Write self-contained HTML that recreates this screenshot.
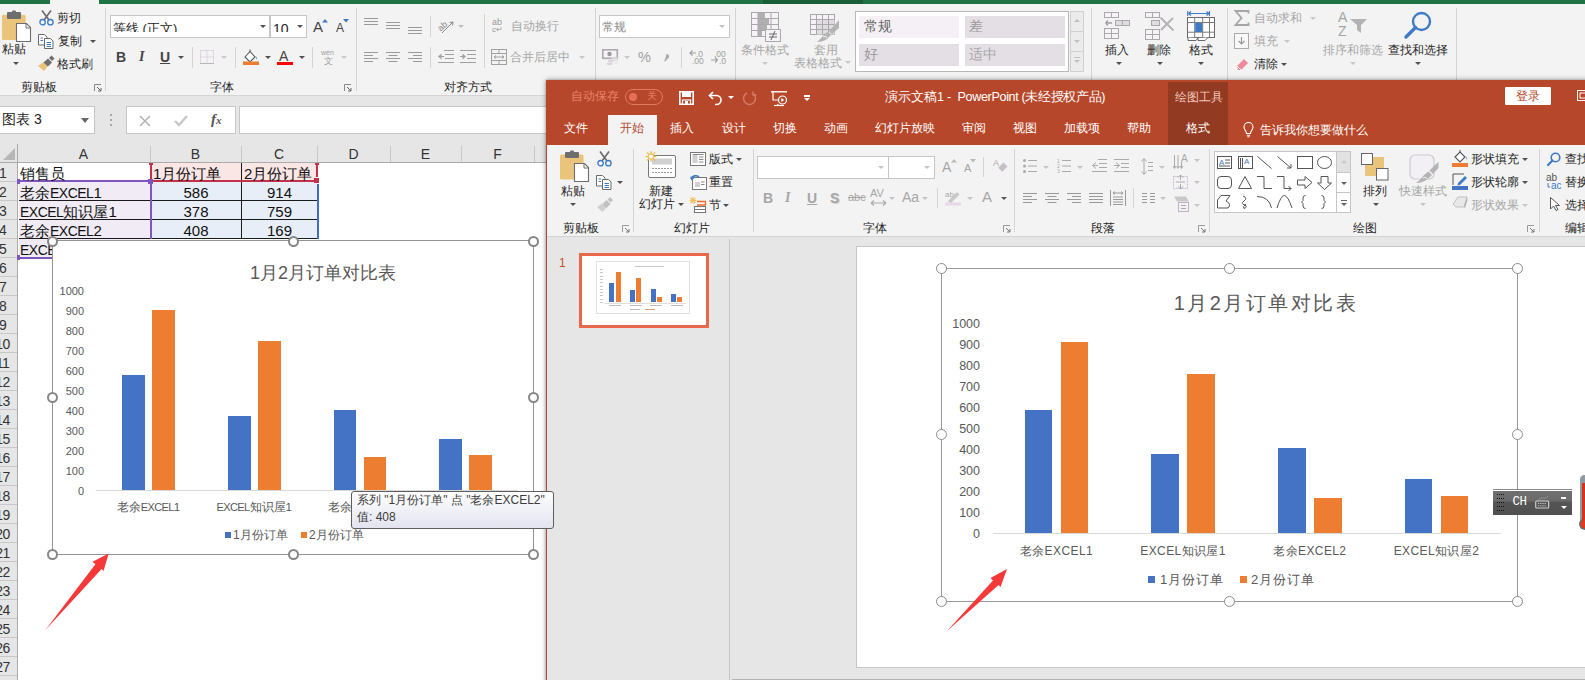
<!DOCTYPE html>
<html><head><meta charset="utf-8">
<style>
*{margin:0;padding:0;box-sizing:border-box}
html,body{width:1585px;height:680px;overflow:hidden;background:#fff}
body{position:relative;font-family:"Liberation Sans",sans-serif;font-size:12px;color:#262626}
.a{position:absolute}
.t{position:absolute;white-space:nowrap;line-height:1}
.sep{position:absolute;width:1px;background:#d6d6d6}
.arr{position:absolute;width:0;height:0;border-left:3px solid transparent;border-right:3px solid transparent;border-top:3px solid #505050}
.arr.l{border-top-color:#c0c0c0}
svg{position:absolute;overflow:visible}
</style></head><body>
<div class="a" style="left:0;top:0;width:1585px;height:4px;background:#217346"></div>
<div class="a" style="left:50px;top:0;width:49px;height:4px;background:#f3f3f3"></div>
<div class="a" style="left:763px;top:0;width:100px;height:4px;background:#1a5e39"></div>
<div class="a" style="left:0;top:4px;width:1585px;height:92px;background:#f3f3f3"></div>
<div class="a" style="left:0;top:95px;width:1585px;height:1px;background:#d5d5d5"></div>
<div class="a" style="left:0;top:96px;width:1585px;height:49px;background:#e6e6e6"></div>
<div class="a" style="left:-2px;top:106px;width:97px;height:28px;background:#fff;border:1px solid #c6c6c6"></div>
<div class="t" style="left:2px;top:112px;font-size:14px;color:#222">图表 3</div>
<div class="arr" style="left:81px;top:118px;border-left-width:4px;border-right-width:4px;border-top-width:5px;border-top-color:#666"></div>
<div class="a" style="left:110px;top:114px;width:2px;height:2px;background:#a8a8a8"></div>
<div class="a" style="left:110px;top:119px;width:2px;height:2px;background:#a8a8a8"></div>
<div class="a" style="left:110px;top:124px;width:2px;height:2px;background:#a8a8a8"></div>
<div class="a" style="left:126px;top:106px;width:110px;height:28px;background:#fff;border:1px solid #c6c6c6"></div>
<svg style="left:139px;top:115px" width="12" height="12"><path d="M1 1L11 11M11 1L1 11" stroke="#b5b5b5" stroke-width="1.6"/></svg>
<svg style="left:174px;top:115px" width="14" height="12"><path d="M1 6L5 10L13 1" stroke="#c8c8c8" stroke-width="2.4" fill="none"/></svg>
<div class="t" style="left:211px;top:112px;font-size:15px;color:#555;font-family:'Liberation Serif',serif;font-style:italic;font-weight:bold">f<span style="font-size:11px">x</span></div>
<div class="a" style="left:239px;top:106px;width:1400px;height:28px;background:#fff;border:1px solid #c6c6c6"></div>
<div class="a" style="left:0;top:144px;width:1585px;height:19px;background:#e6e6e6"></div>
<div class="a" style="left:0;top:162px;width:1585px;height:1px;background:#ababab"></div>
<div class="a" style="left:0;top:163px;width:18px;height:520px;background:#e6e6e6"></div>
<div class="a" style="left:17px;top:144px;width:1px;height:540px;background:#ababab"></div>
<svg style="left:3px;top:148px" width="12" height="12"><path d="M12 0L12 12L0 12Z" fill="#b7b7b7"/></svg>
<div class="a" style="left:150px;top:146px;width:1px;height:16px;background:#c8c8c8"></div>
<div class="t" style="left:17px;width:133px;text-align:center;top:147px;font-size:14px;color:#333">A</div>
<div class="a" style="left:241px;top:146px;width:1px;height:16px;background:#c8c8c8"></div>
<div class="t" style="left:150px;width:91px;text-align:center;top:147px;font-size:14px;color:#333">B</div>
<div class="a" style="left:317px;top:146px;width:1px;height:16px;background:#c8c8c8"></div>
<div class="t" style="left:241px;width:76px;text-align:center;top:147px;font-size:14px;color:#333">C</div>
<div class="a" style="left:390px;top:146px;width:1px;height:16px;background:#c8c8c8"></div>
<div class="t" style="left:317px;width:73px;text-align:center;top:147px;font-size:14px;color:#333">D</div>
<div class="a" style="left:461px;top:146px;width:1px;height:16px;background:#c8c8c8"></div>
<div class="t" style="left:390px;width:71px;text-align:center;top:147px;font-size:14px;color:#333">E</div>
<div class="a" style="left:534px;top:146px;width:1px;height:16px;background:#c8c8c8"></div>
<div class="t" style="left:461px;width:73px;text-align:center;top:147px;font-size:14px;color:#333">F</div>
<div class="a" style="left:606px;top:146px;width:1px;height:16px;background:#c8c8c8"></div>
<div class="t" style="left:534px;width:72px;text-align:center;top:147px;font-size:14px;color:#333">G</div>
<div class="a" style="left:0;top:181px;width:17px;height:1px;background:#c8c8c8"></div>
<div class="t" style="left:-27.5px;width:60px;top:166px;font-size:14px;letter-spacing:-0.6px;color:#333;text-align:center">1</div>
<div class="a" style="left:0;top:200px;width:17px;height:1px;background:#c8c8c8"></div>
<div class="t" style="left:-27.5px;width:60px;top:185px;font-size:14px;letter-spacing:-0.6px;color:#333;text-align:center">2</div>
<div class="a" style="left:0;top:219px;width:17px;height:1px;background:#c8c8c8"></div>
<div class="t" style="left:-27.5px;width:60px;top:204px;font-size:14px;letter-spacing:-0.6px;color:#333;text-align:center">3</div>
<div class="a" style="left:0;top:238px;width:17px;height:1px;background:#c8c8c8"></div>
<div class="t" style="left:-27.5px;width:60px;top:223px;font-size:14px;letter-spacing:-0.6px;color:#333;text-align:center">4</div>
<div class="a" style="left:0;top:257px;width:17px;height:1px;background:#c8c8c8"></div>
<div class="t" style="left:-27.5px;width:60px;top:242px;font-size:14px;letter-spacing:-0.6px;color:#333;text-align:center">5</div>
<div class="a" style="left:0;top:276px;width:17px;height:1px;background:#c8c8c8"></div>
<div class="t" style="left:-27.5px;width:60px;top:261px;font-size:14px;letter-spacing:-0.6px;color:#333;text-align:center">6</div>
<div class="a" style="left:0;top:295px;width:17px;height:1px;background:#c8c8c8"></div>
<div class="t" style="left:-27.5px;width:60px;top:280px;font-size:14px;letter-spacing:-0.6px;color:#333;text-align:center">7</div>
<div class="a" style="left:0;top:314px;width:17px;height:1px;background:#c8c8c8"></div>
<div class="t" style="left:-27.5px;width:60px;top:299px;font-size:14px;letter-spacing:-0.6px;color:#333;text-align:center">8</div>
<div class="a" style="left:0;top:333px;width:17px;height:1px;background:#c8c8c8"></div>
<div class="t" style="left:-27.5px;width:60px;top:318px;font-size:14px;letter-spacing:-0.6px;color:#333;text-align:center">9</div>
<div class="a" style="left:0;top:352px;width:17px;height:1px;background:#c8c8c8"></div>
<div class="t" style="left:-27.5px;width:60px;top:337px;font-size:14px;letter-spacing:-0.6px;color:#333;text-align:center">10</div>
<div class="a" style="left:0;top:371px;width:17px;height:1px;background:#c8c8c8"></div>
<div class="t" style="left:-27.5px;width:60px;top:356px;font-size:14px;letter-spacing:-0.6px;color:#333;text-align:center">11</div>
<div class="a" style="left:0;top:390px;width:17px;height:1px;background:#c8c8c8"></div>
<div class="t" style="left:-27.5px;width:60px;top:375px;font-size:14px;letter-spacing:-0.6px;color:#333;text-align:center">12</div>
<div class="a" style="left:0;top:409px;width:17px;height:1px;background:#c8c8c8"></div>
<div class="t" style="left:-27.5px;width:60px;top:394px;font-size:14px;letter-spacing:-0.6px;color:#333;text-align:center">13</div>
<div class="a" style="left:0;top:428px;width:17px;height:1px;background:#c8c8c8"></div>
<div class="t" style="left:-27.5px;width:60px;top:413px;font-size:14px;letter-spacing:-0.6px;color:#333;text-align:center">14</div>
<div class="a" style="left:0;top:447px;width:17px;height:1px;background:#c8c8c8"></div>
<div class="t" style="left:-27.5px;width:60px;top:432px;font-size:14px;letter-spacing:-0.6px;color:#333;text-align:center">15</div>
<div class="a" style="left:0;top:466px;width:17px;height:1px;background:#c8c8c8"></div>
<div class="t" style="left:-27.5px;width:60px;top:451px;font-size:14px;letter-spacing:-0.6px;color:#333;text-align:center">16</div>
<div class="a" style="left:0;top:485px;width:17px;height:1px;background:#c8c8c8"></div>
<div class="t" style="left:-27.5px;width:60px;top:470px;font-size:14px;letter-spacing:-0.6px;color:#333;text-align:center">17</div>
<div class="a" style="left:0;top:504px;width:17px;height:1px;background:#c8c8c8"></div>
<div class="t" style="left:-27.5px;width:60px;top:489px;font-size:14px;letter-spacing:-0.6px;color:#333;text-align:center">18</div>
<div class="a" style="left:0;top:523px;width:17px;height:1px;background:#c8c8c8"></div>
<div class="t" style="left:-27.5px;width:60px;top:508px;font-size:14px;letter-spacing:-0.6px;color:#333;text-align:center">19</div>
<div class="a" style="left:0;top:542px;width:17px;height:1px;background:#c8c8c8"></div>
<div class="t" style="left:-27.5px;width:60px;top:527px;font-size:14px;letter-spacing:-0.6px;color:#333;text-align:center">20</div>
<div class="a" style="left:0;top:561px;width:17px;height:1px;background:#c8c8c8"></div>
<div class="t" style="left:-27.5px;width:60px;top:546px;font-size:14px;letter-spacing:-0.6px;color:#333;text-align:center">21</div>
<div class="a" style="left:0;top:580px;width:17px;height:1px;background:#c8c8c8"></div>
<div class="t" style="left:-27.5px;width:60px;top:565px;font-size:14px;letter-spacing:-0.6px;color:#333;text-align:center">22</div>
<div class="a" style="left:0;top:599px;width:17px;height:1px;background:#c8c8c8"></div>
<div class="t" style="left:-27.5px;width:60px;top:584px;font-size:14px;letter-spacing:-0.6px;color:#333;text-align:center">23</div>
<div class="a" style="left:0;top:618px;width:17px;height:1px;background:#c8c8c8"></div>
<div class="t" style="left:-27.5px;width:60px;top:603px;font-size:14px;letter-spacing:-0.6px;color:#333;text-align:center">24</div>
<div class="a" style="left:0;top:637px;width:17px;height:1px;background:#c8c8c8"></div>
<div class="t" style="left:-27.5px;width:60px;top:622px;font-size:14px;letter-spacing:-0.6px;color:#333;text-align:center">25</div>
<div class="a" style="left:0;top:656px;width:17px;height:1px;background:#c8c8c8"></div>
<div class="t" style="left:-27.5px;width:60px;top:641px;font-size:14px;letter-spacing:-0.6px;color:#333;text-align:center">26</div>
<div class="a" style="left:0;top:675px;width:17px;height:1px;background:#c8c8c8"></div>
<div class="t" style="left:-27.5px;width:60px;top:660px;font-size:14px;letter-spacing:-0.6px;color:#333;text-align:center">27</div>
<div class="a" style="left:0;top:694px;width:17px;height:1px;background:#c8c8c8"></div>
<div class="t" style="left:-27.5px;width:60px;top:679px;font-size:14px;letter-spacing:-0.6px;color:#333;text-align:center">28</div>
<svg style="left:2px;top:12px" width="30" height="30"><rect x="0" y="2.8" width="23.7" height="25.2" rx="1.5" fill="#ebc47c"/><rect x="5" y="0" width="14" height="7" rx="1" fill="#6e6e6e"/><rect x="10" y="-1.5" width="4" height="3" rx="1" fill="#6e6e6e"/><path d="M14.5 11.5H24.5L28.5 15.5V29.5H14.5Z" fill="#fff" stroke="#6e6e6e" stroke-width="1.1"/><path d="M24 11.5V16H28.5" fill="none" stroke="#6e6e6e" stroke-width="1"/></svg>
<div class="t" style="left:2px;top:43px;font-size:12px;color:#262626;">粘贴</div>
<div class="arr" style="left:12.5px;top:61.5px;border-top-color:#505050"></div>
<svg style="left:39px;top:10px" width="15" height="16"><path d="M3 0.5L10 10M12 0.5L5 10" stroke="#6a6a6a" stroke-width="1.6"/><circle cx="3.6" cy="12.2" r="2.7" fill="none" stroke="#3e7bc4" stroke-width="1.3"/><circle cx="11.4" cy="12.2" r="2.7" fill="none" stroke="#3e7bc4" stroke-width="1.3"/></svg>
<div class="t" style="left:57px;top:12px;font-size:12px;color:#262626;">剪切</div>
<svg style="left:38px;top:34px" width="16" height="15"><path d="M0.5 0.5H6.5L9 3V11H0.5Z" fill="#fff" stroke="#6a6a6a" stroke-width="1"/><path d="M6.5 4.5H12.5L15 7V14.5H6.5Z" fill="#fff" stroke="#6a6a6a" stroke-width="1"/><path d="M2.5 4H5M2.5 6.5H5M8.5 8.5H13M8.5 10.5H13M8.5 12.5H13" stroke="#3e7bc4" stroke-width="1"/></svg>
<div class="t" style="left:58px;top:35px;font-size:12px;color:#262626;">复制</div>
<div class="arr" style="left:90px;top:40.0px;border-top-color:#505050"></div>
<svg style="left:38px;top:56px" width="17" height="16"><path d="M0 10L6 15L10 10L5.5 6Z" fill="#ebc47c"/><path d="M5.5 6.5L10 10.5L14 6.5L10 2.5Z" fill="#6e6e6e"/><path d="M11 2L14 5L16.5 2.5L13.5 -0.5Z" fill="#6e6e6e"/></svg>
<div class="t" style="left:57px;top:58px;font-size:12px;color:#262626;">格式刷</div>
<div class="t" style="left:21px;top:81px;font-size:12px;color:#262626;">剪贴板</div>
<svg style="left:94px;top:84px" width="8" height="8"><path d="M0.5 7V0.5H7" fill="none" stroke="#888" stroke-width="1"/><path d="M3 3L7 7M7 4V7H4" fill="none" stroke="#666" stroke-width="1"/></svg>
<div class="a" style="left:105px;top:8px;width:1px;height:83px;background:#d4d4d4"></div>
<div class="a" style="left:110px;top:15px;width:160px;height:23px;background:#fff;border:1px solid #c6c6c6;overflow:hidden"><div class="t" style="left:2px;top:6px;font-size:13px;color:#262626;height:10px;overflow:hidden;line-height:14px">等线 (正文)</div></div>
<div class="arr" style="left:259.5px;top:25.0px;border-top-color:#505050"></div>
<div class="a" style="left:270px;top:15px;width:37px;height:23px;background:#fff;border:1px solid #c6c6c6;overflow:hidden"><div class="t" style="left:2px;top:6px;font-size:14px;color:#262626;height:10px;overflow:hidden;line-height:15px">10</div></div>
<div class="arr" style="left:296.5px;top:25.0px;border-top-color:#505050"></div>
<div class="t" style="left:313px;top:19px;font-size:15px;color:#444;">A</div>
<svg style="left:322px;top:19px" width="6" height="4"><path d="M0 3.5L3 0L6 3.5Z" fill="#3e7bc4"/></svg>
<div class="t" style="left:336px;top:22px;font-size:12px;color:#444;">A</div>
<svg style="left:343px;top:19px" width="6" height="4"><path d="M0 0L3 3.5L6 0Z" fill="#3e7bc4"/></svg>
<div class="a" style="left:355.5px;top:8px;width:1px;height:83px;background:#d4d4d4"></div>
<div class="t" style="left:116px;top:50px;font-size:14px;color:#444;font-weight:bold">B</div>
<div class="t" style="left:139px;top:50px;font-size:14px;color:#444;font-style:italic;font-family:&quot;Liberation Serif&quot;,serif;font-weight:bold">I</div>
<div class="t" style="left:160px;top:50px;font-size:14px;color:#444;text-decoration:underline;font-weight:bold">U</div>
<div class="arr" style="left:178px;top:55.5px;border-top-color:#505050"></div>
<div class="a" style="left:192px;top:47px;width:1px;height:21px;background:#d4d4d4"></div>
<svg style="left:200px;top:50px" width="14" height="14"><path d="M0.5 0.5H13.5V13.5H0.5ZM7 0.5V13.5M0.5 7H13.5" fill="none" stroke="#c9b9d9" stroke-width="1" stroke-dasharray="1 1"/><path d="M0 13.5H14" stroke="#b8b8b8" stroke-width="1"/></svg>
<div class="arr" style="left:221px;top:55.5px;border-top-color:#c8c8c8"></div>
<div class="a" style="left:235px;top:47px;width:1px;height:21px;background:#d4d4d4"></div>
<svg style="left:243px;top:49px" width="17" height="17"><path d="M2 8L7 2.5L12 8L7 13Z" fill="#fff" stroke="#555" stroke-width="1.1"/><path d="M7 3V0.5" stroke="#555"/><path d="M12.5 7Q15 9 14 11Z" fill="#3e7bc4"/><rect x="0" y="12.5" width="16" height="3.5" fill="#ed7d31"/></svg>
<div class="arr" style="left:264.5px;top:55.5px;border-top-color:#505050"></div>
<div class="t" style="left:279px;top:49px;font-size:14px;color:#444;">A</div>
<div class="a" style="left:277px;top:61.5px;width:16px;height:3.5px;background:#ff0000"></div>
<div class="arr" style="left:298.5px;top:55.5px;border-top-color:#505050"></div>
<div class="a" style="left:312px;top:47px;width:1px;height:21px;background:#d4d4d4"></div>
<div class="t" style="left:321px;top:49px;font-size:7px;color:#a0a0a0;">wén</div>
<div class="t" style="left:324px;top:57px;font-size:9px;color:#a0a0a0;">文</div>
<div class="arr" style="left:341px;top:55.5px;border-top-color:#c8c8c8"></div>
<div class="t" style="left:210px;top:81px;font-size:12px;color:#262626;">字体</div>
<svg style="left:344px;top:84px" width="8" height="8"><path d="M0.5 7V0.5H7" fill="none" stroke="#888" stroke-width="1"/><path d="M3 3L7 7M7 4V7H4" fill="none" stroke="#666" stroke-width="1"/></svg>
<svg style="left:364px;top:18px" width="14" height="8"><path d="M0 0.5H14M0 3.5H14M0 6.5H14" stroke="#9a9a9a" stroke-width="1"/></svg>
<svg style="left:386px;top:22px" width="14" height="8"><path d="M0 0.5H14M0 3.5H14M0 6.5H14" stroke="#9a9a9a" stroke-width="1"/></svg>
<svg style="left:408px;top:27px" width="14" height="8"><path d="M0 0.5H14M0 3.5H14M0 6.5H14" stroke="#9a9a9a" stroke-width="1"/></svg>
<svg style="left:364px;top:52px" width="14" height="10"><path d="M0 0.5H14M0 3.5H9M0 6.5H14M0 9.5H9" stroke="#9a9a9a" stroke-width="1"/></svg>
<svg style="left:386px;top:52px" width="14" height="10"><path d="M0 0.5H14M2.5 3.5H11.5M0 6.5H14M2.5 9.5H11.5" stroke="#9a9a9a" stroke-width="1"/></svg>
<svg style="left:408px;top:52px" width="14" height="10"><path d="M0 0.5H14M5 3.5H14M0 6.5H14M5 9.5H14" stroke="#9a9a9a" stroke-width="1"/></svg>
<div class="a" style="left:430px;top:16px;width:1px;height:21px;background:#d4d4d4"></div>
<div class="a" style="left:430px;top:47px;width:1px;height:21px;background:#d4d4d4"></div>
<svg style="left:438px;top:19px" width="17" height="15"><text x="0" y="10" font-size="9" fill="#8a8a8a" transform="rotate(-40 5 8)" font-family="Liberation Sans">ab</text><path d="M4 14L15 3M15 3L11.5 3.5M15 3L14.5 6.5" stroke="#8a8a8a" stroke-width="1" fill="none"/></svg>
<div class="arr" style="left:457.5px;top:24.5px;border-top-color:#c0c0c0"></div>
<svg style="left:438px;top:50px" width="16" height="13"><path d="M6 0.5H16M7 4.5H16M7 8.5H16M0 12.5H16M2 6.5H6" stroke="#a0a0a0" stroke-width="1" fill="none"/><path d="M0 6.5L3.5 3.5V9.5Z" fill="#a0a0a0"/></svg>
<svg style="left:460px;top:50px" width="16" height="13"><path d="M0 0.5H16M7 4.5H16M7 8.5H16M0 12.5H16M0 6.5H3" stroke="#a0a0a0" stroke-width="1" fill="none"/><path d="M6 6.5L2.5 3.5V9.5Z" fill="#a0a0a0"/></svg>
<div class="a" style="left:484px;top:14px;width:1px;height:54px;background:#d4d4d4"></div>
<div class="t" style="left:492px;top:18px;font-size:9px;color:#999;">ab</div>
<div class="t" style="left:492px;top:26px;font-size:8px;color:#999;">c↵</div>
<div class="t" style="left:511px;top:20px;font-size:12px;color:#a6a6a6;">自动换行</div>
<svg style="left:491px;top:49px" width="16" height="16"><rect x="0.5" y="0.5" width="15" height="15" fill="none" stroke="#a0a0a0"/><path d="M0.5 4.5H15.5M0.5 11.5H15.5M8 0.5V4.5M8 11.5V15.5M3 8H13M3 8L5 6.5M3 8L5 9.5M13 8L11 6.5M13 8L11 9.5" stroke="#a0a0a0" fill="none"/></svg>
<div class="t" style="left:510px;top:51px;font-size:12px;color:#a6a6a6;">合并后居中</div>
<div class="arr" style="left:579px;top:55.5px;border-top-color:#c8c8c8"></div>
<div class="t" style="left:444px;top:81px;font-size:12px;color:#262626;">对齐方式</div>
<div class="a" style="left:594.5px;top:8px;width:1px;height:83px;background:#d4d4d4"></div>
<div class="a" style="left:599px;top:15px;width:131px;height:23px;background:#fff;border:1px solid #c6c6c6"></div>
<div class="t" style="left:602px;top:21px;font-size:12px;color:#8a8a8a;">常规</div>
<div class="arr" style="left:719px;top:25.0px;border-top-color:#c0c0c0"></div>
<svg style="left:602px;top:49px" width="18" height="17"><rect x="0.8" y="0.8" width="14.5" height="8.5" fill="#f6f2f7" stroke="#aaa" stroke-width="1.6"/><circle cx="7.5" cy="5" r="2.2" fill="#999"/><ellipse cx="12.5" cy="9.2" rx="3.2" ry="1.4" fill="#ddd6de"/><ellipse cx="9" cy="12" rx="3.2" ry="1.4" fill="#ddd6de"/><ellipse cx="7.5" cy="14.8" rx="3.2" ry="1.4" fill="#ddd6de"/><path d="M13 11.5H16M13 14H16" stroke="#ddd"/></svg>
<div class="arr" style="left:623.5px;top:55.5px;border-top-color:#c8c8c8"></div>
<div class="t" style="left:638px;top:50px;font-size:14.5px;color:#a0a0a0;">%</div>
<svg style="left:663px;top:54px" width="6" height="7"><path d="M3.5 0.5A2 2 0 1 1 3.5 4.5Q3.5 6 1.5 7" fill="#a8a8a8" stroke="#a8a8a8" stroke-width="1.2"/></svg>
<div class="a" style="left:681px;top:47px;width:1px;height:21px;background:#d4d4d4"></div>
<div class="t" style="left:696px;top:49.5px;font-size:8.5px;color:#a0a0a0;">.0</div>
<div class="t" style="left:692px;top:56.5px;font-size:8.5px;color:#a0a0a0;">.00</div>
<div class="t" style="left:714px;top:49.5px;font-size:8.5px;color:#a0a0a0;">.00</div>
<div class="t" style="left:719px;top:56.5px;font-size:8.5px;color:#a0a0a0;">.0</div>
<svg style="left:689px;top:50px" width="8" height="6"><path d="M7 3H1M3.5 0.5L1 3L3.5 5.5" stroke="#a0a0a0" stroke-width="1.2" fill="none"/></svg>
<svg style="left:711px;top:57px" width="8" height="6"><path d="M0 3H6.5M4 0.5L6.5 3L4 5.5" stroke="#a0a0a0" stroke-width="1.2" fill="none"/></svg>
<div class="a" style="left:734.5px;top:8px;width:1px;height:83px;background:#d4d4d4"></div>
<svg style="left:751px;top:12px" width="31" height="30"><rect x="0.5" y="0.5" width="27" height="24" fill="#f6f2f7" stroke="#a9a9a9"/><rect x="7" y="1" width="6" height="5.5" fill="#b0b0b0"/><rect x="7" y="7" width="11" height="5.5" fill="#b0b0b0"/><rect x="7" y="13" width="9" height="5.5" fill="#b0b0b0"/><rect x="7" y="19" width="4" height="5.5" fill="#b0b0b0"/><path d="M7 0.5V24.5M13.3 0.5V6.5M20 0.5V24.5M0.5 6.5H27.5M0.5 12.5H27.5M0.5 18.5H27.5" stroke="#a9a9a9" fill="none"/><rect x="14.5" y="17.5" width="15" height="12" fill="#f6f2f7" stroke="#a9a9a9"/><path d="M18 22H26M18 25H26M20 28L24 19" stroke="#666" stroke-width="1"/></svg>
<div class="t" style="left:741px;top:44px;font-size:12px;color:#a6a6a6;">条件格式</div>
<div class="arr" style="left:762px;top:61.5px;border-top-color:#c8c8c8"></div>
<svg style="left:810px;top:14px" width="30" height="28"><rect x="0.5" y="0.5" width="24" height="20" fill="#f6f2f7" stroke="#a9a9a9"/><rect x="6.5" y="5.5" width="18" height="15" fill="#e0dce1"/><path d="M6.5 0.5V20.5M12.5 0.5V20.5M18.5 0.5V20.5M0.5 5.5H24.5M0.5 10.5H24.5M0.5 15.5H24.5" stroke="#a9a9a9" fill="none"/><path d="M29 6V14L22 20L19 17L25.5 10Z" fill="#b4b4b4"/><path d="M18 18L21 21L17 25Q13 28 7 28Q12 24 14 20Z" fill="#b4b4b4"/><path d="M13 23Q16 21 17 24" stroke="#f3f3f3" fill="none"/></svg>
<div class="t" style="left:814px;top:44px;font-size:12px;color:#a6a6a6;">套用</div>
<div class="t" style="left:794px;top:57px;font-size:12px;color:#a6a6a6;">表格格式</div>
<div class="arr" style="left:845px;top:61.0px;border-top-color:#c8c8c8"></div>
<div class="a" style="left:855px;top:10.5px;width:214px;height:61px;background:#fff;border:1px solid #b8b8b8"></div>
<div class="a" style="left:859px;top:16px;width:100px;height:22px;background:#f4f0f5"></div>
<div class="a" style="left:965px;top:16px;width:100px;height:22px;background:#e4dfe5"></div>
<div class="a" style="left:859px;top:44px;width:100px;height:22px;background:#e4dfe5"></div>
<div class="a" style="left:965px;top:44px;width:100px;height:22px;background:#e4dfe5"></div>
<div class="t" style="left:864px;top:19px;font-size:14px;color:#666;">常规</div>
<div class="t" style="left:969px;top:19px;font-size:14px;color:#999;">差</div>
<div class="t" style="left:864px;top:47px;font-size:14px;color:#999;">好</div>
<div class="t" style="left:969px;top:47px;font-size:14px;color:#a8a8a8;">适中</div>
<div class="a" style="left:1070px;top:10.5px;width:14px;height:61px;background:#ececec;border:1px solid #d0d0d0"></div>
<div class="a" style="left:1070px;top:30.5px;width:14px;height:1px;background:#d0d0d0"></div>
<div class="a" style="left:1070px;top:50.5px;width:14px;height:1px;background:#d0d0d0"></div>
<svg style="left:1074px;top:19px" width="6" height="4"><path d="M0 3L3 0L6 3Z" fill="#c0c0c0"/></svg>
<div class="arr" style="left:1074px;top:39.5px;border-top-color:#c0c0c0"></div>
<div class="a" style="left:1074px;top:57px;width:6px;height:1px;background:#c0c0c0"></div>
<div class="arr" style="left:1074px;top:59.5px;border-top-color:#c0c0c0"></div>
<div class="a" style="left:1091px;top:8px;width:1px;height:83px;background:#d4d4d4"></div>
<svg style="left:1104px;top:12px" width="28" height="28"><g fill="#f6f2f7" stroke="#a9a9a9" stroke-width="1"><rect x="0.5" y="0.5" width="7" height="5"/><rect x="7.5" y="0.5" width="7" height="5"/><rect x="11.5" y="8.5" width="7" height="5" fill="#e0dce1"/><rect x="18.5" y="8.5" width="7" height="5" fill="#e0dce1"/><rect x="0.5" y="16.5" width="7" height="5"/><rect x="7.5" y="16.5" width="7" height="5"/><rect x="0.5" y="21.5" width="7" height="5"/><rect x="7.5" y="21.5" width="7" height="5"/></g><path d="M2 11H8M1.5 11L4 8.5M1.5 11L4 13.5" stroke="#a0a0a0" fill="none" stroke-width="1.3"/></svg>
<div class="t" style="left:1105px;top:44px;font-size:12px;color:#262626;">插入</div>
<div class="arr" style="left:1115.5px;top:62.0px;border-top-color:#505050"></div>
<svg style="left:1145px;top:12px" width="30" height="28"><g fill="#f6f2f7" stroke="#a9a9a9" stroke-width="1"><rect x="0.5" y="0.5" width="7" height="5"/><rect x="7.5" y="0.5" width="7" height="5"/><rect x="6.5" y="8.5" width="8" height="5" fill="#e0dce1"/><rect x="0.5" y="17.5" width="7" height="5"/><rect x="7.5" y="17.5" width="7" height="5"/><rect x="0.5" y="22.5" width="7" height="5"/><rect x="7.5" y="22.5" width="7" height="5"/></g><path d="M15.5 5.5L28.5 18.5M28 6L16 18" stroke="#b4b4b4" stroke-width="2"/></svg>
<div class="t" style="left:1147px;top:44px;font-size:12px;color:#262626;">删除</div>
<div class="arr" style="left:1157px;top:62.0px;border-top-color:#505050"></div>
<svg style="left:1187px;top:10px" width="29" height="32"><path d="M0.7 1V6M22.5 1V6M1.5 3.5H22M1.5 3.5L4 1.5M1.5 3.5L4 5.5M22 3.5L19.5 1.5M22 3.5L19.5 5.5" stroke="#3e7bc4" stroke-width="1.1" fill="none"/><rect x="0.5" y="7.5" width="27" height="20" fill="#fff" stroke="#6a6a6a"/><path d="M7.7 7.5V27.5M15.7 7.5V27.5M22.5 7.5V27.5M0.5 12.5H27.5M0.5 22.2H27.5" stroke="#7a7a7a" stroke-width="1"/><rect x="8.2" y="13" width="7" height="9" fill="#3e7bc4"/><path d="M1 27.5V30.5H9L11 28M11 28V30.5H18L21 27.5" fill="#fff" stroke="#6a6a6a"/></svg>
<div class="t" style="left:1189px;top:44px;font-size:12px;color:#262626;">格式</div>
<div class="arr" style="left:1198px;top:62.0px;border-top-color:#505050"></div>
<div class="a" style="left:1226.5px;top:8px;width:1px;height:83px;background:#d4d4d4"></div>
<svg style="left:1234px;top:10px" width="16" height="16"><path d="M14.5 3.5V1H1.5L7.5 8L1.5 15H14.5V12.5" fill="none" stroke="#a6a6a6" stroke-width="1.8"/></svg>
<div class="t" style="left:1254px;top:12px;font-size:12px;color:#a6a6a6;">自动求和</div>
<div class="arr" style="left:1310px;top:17.0px;border-top-color:#c8c8c8"></div>
<svg style="left:1234px;top:33px" width="15" height="16"><rect x="0.5" y="0.5" width="14" height="15" fill="#f8f8f8" stroke="#aaa"/><path d="M7.5 4V11M4.5 8L7.5 11L10.5 8" stroke="#999" fill="none" stroke-width="1.2"/></svg>
<div class="t" style="left:1254px;top:35px;font-size:12px;color:#a6a6a6;">填充</div>
<div class="arr" style="left:1284px;top:39.5px;border-top-color:#c8c8c8"></div>
<svg style="left:1235px;top:57px" width="14" height="14"><path d="M2 9L9 2L13 6L6 13H3Z" fill="#ee8a9a"/><path d="M2 9L6 13" stroke="#fff" stroke-width="1"/></svg>
<div class="t" style="left:1254px;top:58px;font-size:12px;color:#262626;">清除</div>
<div class="arr" style="left:1280.5px;top:62.5px;border-top-color:#505050"></div>
<div class="t" style="left:1338px;top:10px;font-size:14px;color:#a6a6a6;">A</div>
<div class="t" style="left:1338px;top:24px;font-size:14px;color:#a6a6a6;">Z</div>
<svg style="left:1350px;top:19px" width="18" height="15"><path d="M0 0H17L11 6V14L7 11V6Z" fill="#b3b3b3"/></svg>
<div class="t" style="left:1323px;top:44px;font-size:12px;color:#a6a6a6;">排序和筛选</div>
<div class="arr" style="left:1350px;top:61.5px;border-top-color:#c8c8c8"></div>
<svg style="left:1404px;top:11px" width="28" height="29"><circle cx="17.5" cy="10.5" r="8.5" fill="none" stroke="#3e7bc4" stroke-width="2.4"/><path d="M11.5 16.5L2 26" stroke="#3e7bc4" stroke-width="3.4" stroke-linecap="round"/></svg>
<div class="t" style="left:1388px;top:44px;font-size:12px;color:#262626;">查找和选择</div>
<div class="arr" style="left:1415px;top:62.0px;border-top-color:#505050"></div>
<div class="a" style="left:1455.5px;top:8px;width:1px;height:83px;background:#d4d4d4"></div>
<div class="a" style="left:151px;top:163px;width:166px;height:18px;background:#fbe6e6"></div>
<div class="a" style="left:19px;top:182px;width:131px;height:75px;background:#f0ebf4"></div>
<div class="a" style="left:152px;top:182px;width:165px;height:57px;background:#e8eef8"></div>
<div class="a" style="left:19px;top:200px;width:298px;height:1px;background:#1a1a1a"></div>
<div class="a" style="left:19px;top:219px;width:298px;height:1px;background:#1a1a1a"></div>
<div class="a" style="left:19px;top:238px;width:298px;height:1px;background:#1a1a1a"></div>
<div class="a" style="left:241px;top:163px;width:1px;height:76px;background:#1a1a1a"></div>
<div class="a" style="left:19px;top:180px;width:131px;height:2px;background:#7f55c0"></div>
<div class="a" style="left:150px;top:182px;width:2px;height:57px;background:#7f55c0"></div>
<div class="a" style="left:19px;top:257px;width:34px;height:2px;background:#7f55c0"></div>
<div class="a" style="left:17px;top:179px;width:3px;height:5px;background:#7f55c0"></div>
<div class="a" style="left:17px;top:255px;width:3px;height:5px;background:#7f55c0"></div>
<div class="a" style="left:148px;top:179px;width:5px;height:5px;background:#7f55c0"></div>
<div class="a" style="left:153px;top:180px;width:162px;height:2px;background:#c4314b"></div>
<div class="a" style="left:150px;top:165px;width:2px;height:14px;background:#c4314b"></div>
<div class="a" style="left:149px;top:163px;width:4px;height:2px;background:#c4314b"></div>
<div class="a" style="left:316px;top:165px;width:2px;height:12px;background:#c4314b"></div>
<div class="a" style="left:315px;top:163px;width:4px;height:2px;background:#c4314b"></div>
<div class="a" style="left:314px;top:178px;width:5px;height:5px;background:#c4314b"></div>
<div class="a" style="left:317px;top:184px;width:2px;height:55px;background:#3a6fc9"></div>
<div class="t" style="left:20px;top:166px;font-size:15px;color:#111">销售员</div>
<div class="t" style="left:153px;top:166px;font-size:15px;color:#111">1月份订单</div>
<div class="t" style="left:244px;top:166px;font-size:15px;color:#111">2月份订单</div>
<div class="t" style="left:20px;top:185px;font-size:15px;color:#111">老余<span style="font-size:14px;letter-spacing:-0.5px">EXCEL</span>1</div>
<div class="t" style="left:20px;top:204px;font-size:15px;color:#111"><span style="font-size:14px;letter-spacing:-0.5px">EXCEL</span>知识屋1</div>
<div class="t" style="left:20px;top:223px;font-size:15px;color:#111">老余<span style="font-size:14px;letter-spacing:-0.5px">EXCEL</span>2</div>
<div class="t" style="left:20px;top:242px;font-size:15px;color:#111"><span style="font-size:14px;letter-spacing:-0.5px">EXCE</span></div>
<div class="t" style="left:151px;top:185px;font-size:15px;color:#111;width:90px;text-align:center">586</div>
<div class="t" style="left:242px;top:185px;font-size:15px;color:#111;width:75px;text-align:center">914</div>
<div class="t" style="left:151px;top:204px;font-size:15px;color:#111;width:90px;text-align:center">378</div>
<div class="t" style="left:242px;top:204px;font-size:15px;color:#111;width:75px;text-align:center">759</div>
<div class="t" style="left:151px;top:223px;font-size:15px;color:#111;width:90px;text-align:center">408</div>
<div class="t" style="left:242px;top:223px;font-size:15px;color:#111;width:75px;text-align:center">169</div>
<div class="a" style="left:51.699999999999996px;top:240.3px;width:482.79999999999995px;height:314.69999999999993px;background:#fff;border:1.4px solid #949494"></div>
<div class="a" style="left:46.9px;top:235.5px;width:11px;height:11px;border-radius:50%;background:#fff;border:2px solid #868686"></div>
<div class="a" style="left:287.59999999999997px;top:235.5px;width:11px;height:11px;border-radius:50%;background:#fff;border:2px solid #868686"></div>
<div class="a" style="left:528.3px;top:235.5px;width:11px;height:11px;border-radius:50%;background:#fff;border:2px solid #868686"></div>
<div class="a" style="left:46.9px;top:392.15px;width:11px;height:11px;border-radius:50%;background:#fff;border:2px solid #868686"></div>
<div class="a" style="left:528.3px;top:392.15px;width:11px;height:11px;border-radius:50%;background:#fff;border:2px solid #868686"></div>
<div class="a" style="left:46.9px;top:548.8px;width:11px;height:11px;border-radius:50%;background:#fff;border:2px solid #868686"></div>
<div class="a" style="left:287.59999999999997px;top:548.8px;width:11px;height:11px;border-radius:50%;background:#fff;border:2px solid #868686"></div>
<div class="a" style="left:528.3px;top:548.8px;width:11px;height:11px;border-radius:50%;background:#fff;border:2px solid #868686"></div>
<div class="t" style="left:173px;width:300px;text-align:center;top:264px;font-size:18px;color:#595959">1月2月订单对比表</div>
<div class="t" style="left:39px;width:45px;text-align:right;top:485.5px;font-size:11px;color:#595959">0</div>
<div class="t" style="left:39px;width:45px;text-align:right;top:465.58px;font-size:11px;color:#595959">100</div>
<div class="t" style="left:39px;width:45px;text-align:right;top:445.66px;font-size:11px;color:#595959">200</div>
<div class="t" style="left:39px;width:45px;text-align:right;top:425.74px;font-size:11px;color:#595959">300</div>
<div class="t" style="left:39px;width:45px;text-align:right;top:405.82px;font-size:11px;color:#595959">400</div>
<div class="t" style="left:39px;width:45px;text-align:right;top:385.90000000000003px;font-size:11px;color:#595959">500</div>
<div class="t" style="left:39px;width:45px;text-align:right;top:365.98px;font-size:11px;color:#595959">600</div>
<div class="t" style="left:39px;width:45px;text-align:right;top:346.06px;font-size:11px;color:#595959">700</div>
<div class="t" style="left:39px;width:45px;text-align:right;top:326.14000000000004px;font-size:11px;color:#595959">800</div>
<div class="t" style="left:39px;width:45px;text-align:right;top:306.21999999999997px;font-size:11px;color:#595959">900</div>
<div class="t" style="left:39px;width:45px;text-align:right;top:286.3px;font-size:11px;color:#595959">1000</div>
<div class="a" style="left:96px;top:490px;width:422px;height:1px;background:#d9d9d9"></div>
<div class="a" style="left:122.1px;top:374.7924px;width:22.8px;height:115.2076px;background:#4472c4"></div>
<div class="a" style="left:152.1px;top:310.3076px;width:22.8px;height:179.6924px;background:#ed7d31"></div>
<div class="t" style="left:88.5px;width:120px;text-align:center;top:501.5px;font-size:11.5px;color:#595959">老余<span style="letter-spacing:-0.6px;font-size:11px">EXCEL</span>1</div>
<div class="a" style="left:227.79999999999998px;top:415.6852px;width:22.8px;height:74.3148px;background:#4472c4"></div>
<div class="a" style="left:257.8px;top:340.7806px;width:22.8px;height:149.2194px;background:#ed7d31"></div>
<div class="t" style="left:194.2px;width:120px;text-align:center;top:501.5px;font-size:11.5px;color:#595959"><span style="letter-spacing:-0.6px;font-size:11px">EXCEL</span>知识屋1</div>
<div class="a" style="left:333.5px;top:409.7872px;width:22.8px;height:80.2128px;background:#4472c4"></div>
<div class="a" style="left:363.5px;top:456.7746px;width:22.8px;height:33.2254px;background:#ed7d31"></div>
<div class="t" style="left:299.9px;width:120px;text-align:center;top:501.5px;font-size:11.5px;color:#595959">老余<span style="letter-spacing:-0.6px;font-size:11px">EXCEL</span>2</div>
<div class="a" style="left:439.20000000000005px;top:439.2772px;width:22.8px;height:50.7228px;background:#4472c4"></div>
<div class="a" style="left:469.20000000000005px;top:455.2018px;width:22.8px;height:34.7982px;background:#ed7d31"></div>
<div class="t" style="left:405.6px;width:120px;text-align:center;top:501.5px;font-size:11.5px;color:#595959"><span style="letter-spacing:-0.6px;font-size:11px">EXCEL</span>知识屋2</div>
<div class="a" style="left:225px;top:532px;width:6px;height:6px;background:#4472c4"></div>
<div class="t" style="left:233px;top:528.5px;font-size:12px;color:#595959">1月份订单</div>
<div class="a" style="left:301px;top:532px;width:6px;height:6px;background:#ed7d31"></div>
<div class="t" style="left:309px;top:528.5px;font-size:12px;color:#595959">2月份订单</div>
<svg style="left:0;top:0" width="1" height="1"><path d="M45.4 630L95.4 564.3L92.5 561.8L108.7 553.5L103.5 570.9L101.6 568.9Z" fill="#f63838"/></svg>
<div class="a" style="left:546px;top:80px;width:1100px;height:700px;box-shadow:0 0 6px 0.5px rgba(0,0,0,.3),0 0 2.5px 0.5px rgba(0,0,0,.3)"></div>
<div class="a" style="left:546px;top:80px;width:1100px;height:65px;background:#b7472a"></div>
<div class="a" style="left:546px;top:80px;width:1px;height:600px;background:#b7472a"></div>
<div class="a" style="left:1168px;top:82px;width:60px;height:63px;background:#933a22"></div>
<div class="a" style="left:608px;top:115px;width:49px;height:31px;background:#f3f3f3"></div>
<div class="a" style="left:547px;top:145px;width:1100px;height:91px;background:#f3f3f3"></div>
<div class="a" style="left:547px;top:236px;width:1100px;height:1px;background:#d4d4d4"></div>
<div class="a" style="left:547px;top:237px;width:1100px;height:450px;background:#e6e6e6"></div>
<div class="a" style="left:729px;top:239px;width:1px;height:450px;background:#c6c6c6"></div>
<div class="a" style="left:732px;top:679px;width:900px;height:1px;background:#b4b4b4"></div>
<div class="a" style="left:856px;top:246px;width:800px;height:422px;background:#fff;border:1px solid #c6c6c6"></div>
<div class="t" style="left:559px;top:257px;font-size:12px;color:#c5502c">1</div>
<div class="a" style="left:579px;top:253px;width:130px;height:75px;background:#fff;border:3px solid #e8694a"></div>
<div class="t" style="left:571px;top:90px;font-size:12px;color:#e8846c">自动保存</div>
<div class="a" style="left:625px;top:89px;width:38px;height:16px;border:1px solid #e07a62;border-radius:8px"></div>
<div class="a" style="left:629px;top:93px;width:8px;height:8px;border-radius:50%;background:#e8705a"></div>
<div class="t" style="left:647px;top:91px;font-size:10px;color:#e8846c">关</div>
<svg style="left:679px;top:91px" width="15" height="14"><path d="M0.8 0.8H14.2V13.2H0.8Z" fill="none" stroke="#fff" stroke-width="1.6"/><rect x="3" y="1" width="9" height="5" fill="#fff"/><rect x="3.5" y="9" width="8" height="4.2" fill="#b7472a" stroke="#fff" stroke-width="1.2"/><rect x="6" y="10" width="3" height="3.2" fill="#fff"/></svg>
<svg style="left:708px;top:90px" width="15" height="15"><path d="M5 2L1.5 5.5L5 9" fill="none" stroke="#fff" stroke-width="1.7"/><path d="M2 5.5H8.5A4.5 4.5 0 0 1 8.5 14.5H7" fill="none" stroke="#fff" stroke-width="1.7"/></svg>
<div class="arr" style="left:728px;top:96px;border-top-color:#fff"></div>
<svg style="left:743px;top:91px" width="14" height="14"><path d="M10.5 3A6 6 0 1 1 4 2" fill="none" stroke="#d27c66" stroke-width="1.5"/><path d="M10 0.5V4H13.5" fill="none" stroke="#d27c66" stroke-width="1.5"/></svg>
<svg style="left:771px;top:91px" width="17" height="16"><path d="M0 0.8H16" stroke="#fff" stroke-width="1.4"/><path d="M2 1V9H8" fill="none" stroke="#fff" stroke-width="1.2"/><circle cx="11.5" cy="9" r="4" fill="none" stroke="#fff" stroke-width="1.2"/><path d="M10.3 7V11L13.3 9Z" fill="#fff"/><path d="M3 14.5H13" stroke="#fff" stroke-width="1.2"/><path d="M6 13L8 14.5" stroke="#fff" stroke-width="1"/></svg>
<div class="a" style="left:804px;top:95px;width:6px;height:1.5px;background:#fff"></div>
<div class="arr" style="left:804px;top:98px;border-top-color:#fff"></div>
<div class="t" style="left:885px;top:90.5px;font-size:12.6px;color:#fff">演示文稿1</div>
<div class="t" style="left:947px;top:90.5px;font-size:12.6px;color:#fff">-</div>
<div class="t" style="left:957.5px;top:90.5px;font-size:12.6px;color:#fff;letter-spacing:-0.35px">PowerPoint (未经授权产品)</div>
<div class="t" style="left:1175px;top:91px;font-size:12px;color:#f2c8bc">绘图工具</div>
<div class="a" style="left:1505px;top:87px;width:46px;height:18px;background:#fff;border-radius:1px"></div>
<div class="t" style="left:1516px;top:90px;font-size:12px;color:#b7472a">登录</div>
<svg style="left:1577px;top:90px" width="12" height="12"><rect x="0.5" y="0.5" width="11" height="10" fill="none" stroke="#fff"/><rect x="3" y="3" width="6" height="5" fill="none" stroke="#fff"/></svg>
<div class="t" style="left:564px;top:122px;font-size:12px;color:#fff">文件</div>
<div class="t" style="left:620px;top:122px;font-size:12px;color:#b7472a">开始</div>
<div class="t" style="left:670px;top:122px;font-size:12px;color:#fff">插入</div>
<div class="t" style="left:722px;top:122px;font-size:12px;color:#fff">设计</div>
<div class="t" style="left:773px;top:122px;font-size:12px;color:#fff">切换</div>
<div class="t" style="left:824px;top:122px;font-size:12px;color:#fff">动画</div>
<div class="t" style="left:875px;top:122px;font-size:12px;color:#fff">幻灯片放映</div>
<div class="t" style="left:962px;top:122px;font-size:12px;color:#fff">审阅</div>
<div class="t" style="left:1013px;top:122px;font-size:12px;color:#fff">视图</div>
<div class="t" style="left:1064px;top:122px;font-size:12px;color:#fff">加载项</div>
<div class="t" style="left:1127px;top:122px;font-size:12px;color:#fff">帮助</div>
<div class="t" style="left:1186px;top:122px;font-size:12px;color:#fff">格式</div>
<svg style="left:1243px;top:122px" width="11" height="16"><path d="M3.5 11.5C3.5 9 1 8 1 5A4.5 4.5 0 0 1 10 5C10 8 7.5 9 7.5 11.5Z" fill="none" stroke="#fff" stroke-width="1.1"/><path d="M3.8 13.2H7.2M4.3 14.8H6.7" stroke="#fff" stroke-width="1"/></svg>
<div class="t" style="left:1260px;top:124px;font-size:12px;color:#fff">告诉我你想要做什么</div>
<svg style="left:560px;top:151px" width="30" height="32"><rect x="0" y="3.5" width="23.5" height="25" rx="1.5" fill="#ebc47c"/><rect x="5" y="1" width="14" height="6" rx="1" fill="#6e6e6e"/><rect x="10" y="-0.5" width="4" height="3" rx="1" fill="#6e6e6e"/><path d="M14.5 12.5H24.5L28.5 16.5V30.5H14.5Z" fill="#fff" stroke="#6e6e6e" stroke-width="1.1"/><path d="M24 12.5V17H28.5" fill="none" stroke="#6e6e6e" stroke-width="1"/></svg>
<div class="t" style="left:561px;top:185px;font-size:12px;color:#262626;">粘贴</div>
<div class="arr" style="left:570px;top:202.5px;border-top-color:#505050"></div>
<svg style="left:597px;top:151px" width="15" height="16"><path d="M3 0.5L10 10M12 0.5L5 10" stroke="#6a6a6a" stroke-width="1.6"/><circle cx="3.6" cy="12.2" r="2.7" fill="none" stroke="#3e7bc4" stroke-width="1.3"/><circle cx="11.4" cy="12.2" r="2.7" fill="none" stroke="#3e7bc4" stroke-width="1.3"/></svg>
<svg style="left:596px;top:175px" width="16" height="15"><path d="M0.5 0.5H6.5L9 3V11H0.5Z" fill="#fff" stroke="#6a6a6a" stroke-width="1"/><path d="M6.5 4.5H12.5L15 7V14.5H6.5Z" fill="#fff" stroke="#6a6a6a" stroke-width="1"/><path d="M2.5 4H5M2.5 6.5H5M8.5 8.5H13M8.5 10.5H13M8.5 12.5H13" stroke="#3e7bc4" stroke-width="1"/></svg>
<div class="arr" style="left:617px;top:180.5px;border-top-color:#505050"></div>
<svg style="left:597px;top:198px" width="16" height="15"><path d="M0 9L5.5 14L9.5 9.5L5 5.5Z" fill="#d0d0d0"/><path d="M5.5 6L9.5 10L13.5 6L9.5 2Z" fill="#c0c0c0"/><path d="M10.5 1.5L13.5 4.5L16 2L13 -1Z" fill="#c0c0c0"/></svg>
<div class="t" style="left:563px;top:222px;font-size:12px;color:#262626;">剪贴板</div>
<svg style="left:622px;top:225px" width="8" height="8"><path d="M0.5 7V0.5H7" fill="none" stroke="#999" stroke-width="1"/><path d="M3 3L7 7M7 4V7H4" fill="none" stroke="#777" stroke-width="1"/></svg>
<div class="a" style="left:633px;top:149px;width:1px;height:83px;background:#d4d4d4"></div>
<svg style="left:645px;top:151px" width="32" height="28"><rect x="3.5" y="4.5" width="27" height="22" rx="1.5" fill="#fff" stroke="#777" stroke-width="1"/><rect x="7" y="7.5" width="20" height="6" fill="#d0d0d0"/><path d="M7 17.5H27M7 21.5H27" stroke="#999" stroke-width="1" stroke-dasharray="2 1"/><g stroke="#f0c05a" stroke-width="1.3"><path d="M6 0V11M0.5 5.5H11.5M2 1.5L10 9.5M10 1.5L2 9.5"/></g><circle cx="6" cy="5.5" r="2.6" fill="#fff" stroke="#f0c05a" stroke-width="1.2"/></svg>
<div class="t" style="left:649px;top:185px;font-size:12px;color:#262626;">新建</div>
<div class="t" style="left:639px;top:198px;font-size:12px;color:#262626;">幻灯片</div>
<div class="arr" style="left:678px;top:203.0px;border-top-color:#505050"></div>
<svg style="left:690px;top:152px" width="16" height="14"><rect x="0.5" y="0.5" width="15" height="13" fill="#fff" stroke="#777"/><rect x="2.5" y="3" width="5" height="8" fill="#d0d0d0"/><path d="M2.5 2.5H13.5M9 5H13.5M9 7.5H13.5M9 10H13.5" stroke="#888"/></svg>
<div class="t" style="left:709px;top:153px;font-size:12px;color:#262626;">版式</div>
<div class="arr" style="left:736px;top:157.5px;border-top-color:#505050"></div>
<svg style="left:690px;top:174px" width="17" height="16"><rect x="2.5" y="3.5" width="14" height="12" fill="#fff" stroke="#777"/><rect x="5" y="8" width="5" height="5" fill="#d0d0d0"/><path d="M11 8H14.5M11 10.5H14.5" stroke="#888"/><path d="M1 5A5 5 0 0 1 9 3" fill="none" stroke="#3e7bc4" stroke-width="1.6"/><path d="M0 2.5L1.5 6.5L4.5 4Z" fill="#3e7bc4"/></svg>
<div class="t" style="left:709px;top:176px;font-size:12px;color:#262626;">重置</div>
<svg style="left:689px;top:197px" width="18" height="16"><g stroke="#f0c05a" stroke-width="1.1"><path d="M4 0V7M0.5 3.5H7.5M1.5 1L6.5 6M6.5 1L1.5 6"/></g><path d="M8 4.5H16.5V8H8" fill="none" stroke="#e8712f" stroke-width="1.3"/><rect x="5.5" y="9.5" width="11" height="6" fill="#fff" stroke="#777"/><path d="M6 12.5H16" stroke="#777"/></svg>
<div class="t" style="left:709px;top:199px;font-size:12px;color:#262626;">节</div>
<div class="arr" style="left:723px;top:203.5px;border-top-color:#505050"></div>
<div class="t" style="left:674px;top:222px;font-size:12px;color:#262626;">幻灯片</div>
<div class="a" style="left:752.5px;top:149px;width:1px;height:83px;background:#d4d4d4"></div>
<div class="a" style="left:757px;top:156px;width:132px;height:23px;background:#fff;border:1px solid #c6c6c6"></div>
<div class="a" style="left:888px;top:156px;width:47px;height:23px;background:#fff;border:1px solid #c6c6c6"></div>
<div class="arr" style="left:878px;top:165.5px;border-top-color:#c4c4c4"></div>
<div class="arr" style="left:924px;top:165.5px;border-top-color:#c4c4c4"></div>
<div class="t" style="left:942px;top:160px;font-size:14px;color:#a6a6a6;">A</div>
<svg style="left:951px;top:159px" width="6" height="4"><path d="M0 3.5L3 0L6 3.5Z" fill="#bbb"/></svg>
<div class="t" style="left:964px;top:163px;font-size:11px;color:#a6a6a6;">A</div>
<svg style="left:970px;top:159px" width="6" height="4"><path d="M0 0L3 3.5L6 0Z" fill="#bbb"/></svg>
<div class="a" style="left:983px;top:157px;width:1px;height:20px;background:#d4d4d4"></div>
<svg style="left:993px;top:157px" width="15" height="17"><text x="0" y="9" font-size="9" fill="#aaa" font-family="Liberation Sans">A</text><path d="M5 11L10.5 5.5L14.5 9.5L9 15Z" fill="#c8c0c8"/><path d="M5 11L9 15" stroke="#eee"/></svg>
<div class="t" style="left:763px;top:191px;font-size:14px;color:#a6a6a6;font-weight:bold">B</div>
<div class="t" style="left:785px;top:191px;font-size:14px;color:#a6a6a6;font-style:italic;font-family:&quot;Liberation Serif&quot;,serif;font-weight:bold">I</div>
<div class="t" style="left:807px;top:191px;font-size:14px;color:#a6a6a6;text-decoration:underline;font-weight:bold">U</div>
<div class="t" style="left:830px;top:191px;font-size:14px;color:#a6a6a6;font-weight:bold;text-shadow:1px 1px 1px #ccc">S</div>
<div class="t" style="left:848px;top:192px;font-size:11px;color:#a6a6a6;text-decoration:line-through">abc</div>
<div class="t" style="left:870px;top:188px;font-size:11px;color:#a6a6a6;">AV</div>
<svg style="left:870px;top:200px" width="17" height="6"><path d="M1 3H16M1 3L4 0.5M1 3L4 5.5M16 3L13 0.5M16 3L13 5.5" stroke="#aaa" fill="none" stroke-width="1.1"/></svg>
<div class="arr" style="left:889px;top:196.5px;border-top-color:#c4c4c4"></div>
<div class="t" style="left:902px;top:190px;font-size:14px;color:#a6a6a6;">Aa</div>
<div class="arr" style="left:922px;top:196.5px;border-top-color:#c4c4c4"></div>
<div class="a" style="left:937px;top:188px;width:1px;height:20px;background:#d4d4d4"></div>
<svg style="left:945px;top:189px" width="16" height="17"><text x="0" y="8" font-size="8" fill="#aaa" font-family="Liberation Sans">ab</text><path d="M3 12L12 3L14.5 5.5L5.5 14.5Z" fill="#c8c8c8"/><rect x="0" y="13.5" width="16" height="3" fill="#e8d8e8"/></svg>
<div class="arr" style="left:966.5px;top:196.5px;border-top-color:#c4c4c4"></div>
<div class="t" style="left:982px;top:189px;font-size:15px;color:#a6a6a6;">A</div>
<div class="arr" style="left:1000.5px;top:196.5px;border-top-color:#555"></div>
<div class="t" style="left:863px;top:222px;font-size:12px;color:#262626;">字体</div>
<svg style="left:1003px;top:225px" width="8" height="8"><path d="M0.5 7V0.5H7" fill="none" stroke="#999" stroke-width="1"/><path d="M3 3L7 7M7 4V7H4" fill="none" stroke="#777" stroke-width="1"/></svg>
<div class="a" style="left:1014.4px;top:149px;width:1px;height:83px;background:#d4d4d4"></div>
<svg style="left:1023px;top:159px" width="14" height="14"><g fill="#aaa"><circle cx="1.5" cy="1.5" r="1.5"/><circle cx="1.5" cy="7" r="1.5"/><circle cx="1.5" cy="12.5" r="1.5"/></g><path d="M5 1.5H14M5 7H14M5 12.5H14" stroke="#aaa"/></svg>
<div class="arr" style="left:1043px;top:165.5px;border-top-color:#c4c4c4"></div>
<svg style="left:1057px;top:158px" width="14" height="16"><text x="0" y="5" font-size="5" fill="#aaa" font-family="Liberation Sans">1</text><text x="0" y="10" font-size="5" fill="#aaa" font-family="Liberation Sans">2</text><text x="0" y="15" font-size="5" fill="#aaa" font-family="Liberation Sans">3</text><path d="M5 2.5H14M5 8H14M5 13.5H14" stroke="#aaa"/></svg>
<div class="arr" style="left:1077px;top:165.5px;border-top-color:#c4c4c4"></div>
<svg style="left:1092px;top:159px" width="15" height="13"><path d="M6 0.5H15M7 4.5H15M7 8.5H15M0 12.5H15M0.5 6.5L4 3.5M0.5 6.5L4 9.5M0.5 6.5H6" stroke="#aaa" stroke-width="1" fill="none"/></svg>
<svg style="left:1114px;top:159px" width="15" height="13"><path d="M0 0.5H15M7 4.5H15M7 8.5H15M0 12.5H15M5.5 6.5L2 3.5M5.5 6.5L2 9.5M0 6.5H5.5" stroke="#aaa" stroke-width="1" fill="none"/></svg>
<svg style="left:1141px;top:158px" width="12" height="17"><path d="M3 1V16M0.5 3.5L3 0.5L5.5 3.5M0.5 13.5L3 16.5L5.5 13.5" stroke="#aaa" fill="none"/><path d="M7 4.5H12M7 8.5H12M7 12.5H12" stroke="#aaa"/></svg>
<div class="arr" style="left:1159px;top:165.5px;border-top-color:#c4c4c4"></div>
<svg style="left:1173px;top:153px" width="16" height="16"><path d="M1.5 2V15M5 2V15M8.5 9V15" stroke="#aaa"/><path d="M0 13L1.5 15.5L3 13M3.5 13L5 15.5L6.5 13M7 13L8.5 15.5L10 13" stroke="#aaa" fill="none"/><text x="8" y="9" font-size="10" fill="#aaa" font-family="Liberation Sans">A</text></svg>
<div class="arr" style="left:1194px;top:158.5px;border-top-color:#c4c4c4"></div>
<svg style="left:1173px;top:174px" width="15" height="16"><rect x="0.5" y="2.5" width="14" height="12" fill="none" stroke="#c8b8d0" stroke-dasharray="2 1"/><path d="M7.5 1V6M5 3.5L7.5 1L10 3.5M7.5 10V15M5 12.5L7.5 15L10 12.5M3 8H12" stroke="#aaa" fill="none"/></svg>
<div class="arr" style="left:1194px;top:180.5px;border-top-color:#c4c4c4"></div>
<svg style="left:1173px;top:196px" width="17" height="16"><path d="M1 0.5H13L16 5.5H4Z" fill="#c8c8c8"/><rect x="5.5" y="6.5" width="10" height="9" fill="#f5f0f5" stroke="#c0b0c8"/><path d="M8 9.5H13M8 12.5H13" stroke="#aaa"/></svg>
<div class="arr" style="left:1194px;top:203.5px;border-top-color:#c4c4c4"></div>
<svg style="left:1023px;top:193px" width="14" height="10"><path d="M0 0.5H14M0 3.5H9M0 6.5H14M0 9.5H9" stroke="#999" stroke-width="1"/></svg>
<svg style="left:1045px;top:193px" width="14" height="10"><path d="M0 0.5H14M2.5 3.5H11.5M0 6.5H14M2.5 9.5H11.5" stroke="#999" stroke-width="1"/></svg>
<svg style="left:1067px;top:193px" width="14" height="10"><path d="M0 0.5H14M5 3.5H14M0 6.5H14M5 9.5H14" stroke="#999" stroke-width="1"/></svg>
<svg style="left:1089px;top:193px" width="14" height="10"><path d="M0 0.5H14M0 3.5H14M0 6.5H14M0 9.5H14" stroke="#999" stroke-width="1"/></svg>
<svg style="left:1110px;top:190px" width="16" height="16"><path d="M0.5 0V16M15.5 0V16M3 3H13M3 3L5 1.5M3 3L5 4.5M13 3L11 1.5M13 3L11 4.5M3 7H13M3 9.5H13M3 12H13M3 14.5H13" stroke="#999" fill="none"/></svg>
<div class="a" style="left:1133px;top:188px;width:1px;height:20px;background:#d4d4d4"></div>
<svg style="left:1142px;top:193px" width="13" height="10"><path d="M0 0.5H5M0 3.5H5M0 6.5H5M0 9.5H5M8 0.5H13M8 3.5H13M8 6.5H13M8 9.5H13" stroke="#999"/></svg>
<div class="arr" style="left:1160px;top:196.5px;border-top-color:#c4c4c4"></div>
<div class="t" style="left:1091px;top:222px;font-size:12px;color:#262626;">段落</div>
<svg style="left:1198px;top:225px" width="8" height="8"><path d="M0.5 7V0.5H7" fill="none" stroke="#999" stroke-width="1"/><path d="M3 3L7 7M7 4V7H4" fill="none" stroke="#777" stroke-width="1"/></svg>
<div class="a" style="left:1209px;top:149px;width:1px;height:83px;background:#d4d4d4"></div>
<div class="a" style="left:1214px;top:151px;width:123px;height:62px;background:#fff;border:1px solid #c6c6c6"></div>
<div class="a" style="left:1336px;top:151px;width:15px;height:62px;background:#fff;border:1px solid #c6c6c6"></div>
<div class="a" style="left:1337px;top:152px;width:13px;height:20px;background:#e2e2e2"></div>
<div class="a" style="left:1336px;top:172px;width:15px;height:1px;background:#c6c6c6"></div>
<div class="a" style="left:1336px;top:192px;width:15px;height:1px;background:#c6c6c6"></div>
<svg style="left:1341px;top:160px" width="6" height="4"><path d="M0 3L3 0L6 3Z" fill="#c8c8c8"/></svg>
<div class="arr" style="left:1341px;top:181.5px;border-top-color:#666"></div>
<div class="a" style="left:1341px;top:200px;width:6px;height:1px;background:#666"></div>
<div class="arr" style="left:1341px;top:202.5px;border-top-color:#666"></div>
<svg style="left:1217px;top:156px" width="16" height="14"><rect x="0.5" y="0.5" width="14" height="12" fill="none" stroke="#555"/><text x="2" y="9" font-size="8" fill="#3e7bc4" font-family="Liberation Sans">A</text><path d="M8 4H13M8 7H13M2 10H13" stroke="#555"/></svg>
<svg style="left:1238px;top:156px" width="16" height="14"><rect x="0.5" y="0.5" width="14" height="12" fill="none" stroke="#555"/><text x="6" y="8" font-size="8" fill="#3e7bc4" font-family="Liberation Sans">A</text><path d="M2.5 2V12M4.5 2V12" stroke="#555"/></svg>
<svg style="left:1257px;top:156px" width="16" height="14"><path d="M0.5 0.5L14.5 12.5" stroke="#555"/></svg>
<svg style="left:1277px;top:156px" width="16" height="14"><path d="M0.5 0.5L14 12M14 12V8M14 12H10" stroke="#555" fill="none"/></svg>
<svg style="left:1297px;top:156px" width="16" height="14"><rect x="0.5" y="0.5" width="15" height="12" fill="none" stroke="#555"/></svg>
<svg style="left:1317px;top:156px" width="16" height="14"><ellipse cx="7.5" cy="6.5" rx="7" ry="6" fill="none" stroke="#555"/></svg>
<svg style="left:1217px;top:176px" width="16" height="14"><rect x="0.5" y="0.5" width="14" height="12" rx="3.5" fill="none" stroke="#555"/></svg>
<svg style="left:1238px;top:176px" width="16" height="14"><path d="M7 0.5L13.5 12.5H0.5Z" fill="none" stroke="#555"/></svg>
<svg style="left:1257px;top:176px" width="16" height="14"><path d="M0 0.5H7V12.5H15" fill="none" stroke="#555"/></svg>
<svg style="left:1277px;top:176px" width="16" height="14"><path d="M0 0.5H7V12.5H14M14 12.5L11.5 10M14 12.5L11.5 15" fill="none" stroke="#555"/></svg>
<svg style="left:1297px;top:176px" width="16" height="14"><path d="M0.5 4H8V0.5L15 6.5L8 12.5V9H0.5Z" fill="none" stroke="#555"/></svg>
<svg style="left:1317px;top:176px" width="16" height="14"><path d="M4 0.5H11V7H14.5L7.5 13.5L0.5 7H4Z" fill="none" stroke="#555"/></svg>
<svg style="left:1217px;top:195px" width="16" height="14"><path d="M0.5 13V5L4 0.5H13L9 6Q15 9 11 13Z" fill="none" stroke="#555"/></svg>
<svg style="left:1238px;top:195px" width="16" height="14"><path d="M5 1Q10 3 6 6Q2 9 7 10Q10 12 6 13.5Q4 12 8 9" fill="none" stroke="#555"/></svg>
<svg style="left:1257px;top:195px" width="16" height="14"><path d="M0 1.5Q12 1.5 14.5 13" fill="none" stroke="#555"/></svg>
<svg style="left:1277px;top:195px" width="16" height="14"><path d="M0 13Q4 0 7.5 0.5Q11 1 15 13" fill="none" stroke="#555"/></svg>
<svg style="left:1301px;top:195px" width="16" height="14"><path d="M4.5 0.5Q2 0.5 2 3V5.5L0.5 7L2 8.5V11Q2 13.5 4.5 13.5" fill="none" stroke="#555"/></svg>
<svg style="left:1321px;top:195px" width="16" height="14"><path d="M0.5 0.5Q3 0.5 3 3V5.5L4.5 7L3 8.5V11Q3 13.5 0.5 13.5" fill="none" stroke="#555"/></svg>
<svg style="left:1361px;top:153px" width="28" height="28"><rect x="4" y="4" width="19" height="19" fill="#ebc47c"/><rect x="0.5" y="0.5" width="11" height="11" fill="#fff" stroke="#666"/><rect x="15.5" y="15.5" width="11.5" height="11.5" fill="#fff" stroke="#666"/></svg>
<div class="t" style="left:1363px;top:185px;font-size:12px;color:#262626;">排列</div>
<div class="arr" style="left:1373px;top:203.0px;border-top-color:#505050"></div>
<svg style="left:1409px;top:154px" width="32" height="30"><rect x="1" y="1" width="24" height="24" rx="5" fill="#f3f0f5" stroke="#d0c8d4" stroke-width="1.2"/><path d="M29.5 8V14L24 20L20.5 16.5L26 11Z" fill="#b4b4b4"/><path d="M19.5 17.5L23 21L18.5 25Q14 29 7 29Q13 24.5 15 21Z" fill="#b4b4b4"/><path d="M14 24Q17 22 18 25" stroke="#f3f3f3" fill="none"/></svg>
<div class="t" style="left:1399px;top:185px;font-size:12px;color:#a6a6a6;">快速样式</div>
<div class="arr" style="left:1420px;top:203.0px;border-top-color:#c4c4c4"></div>
<svg style="left:1452px;top:150px" width="17" height="18"><path d="M3 7L8 2L13 7L8 12Z" fill="#fff" stroke="#555" stroke-width="1.1"/><path d="M8 2.5V0" stroke="#555"/><path d="M13.5 6Q16 8 15 10Z" fill="#3e7bc4"/><rect x="0" y="13" width="16" height="4" fill="#ed7d31"/></svg>
<div class="t" style="left:1471px;top:153px;font-size:12px;color:#262626;">形状填充</div>
<div class="arr" style="left:1522px;top:157.5px;border-top-color:#505050"></div>
<svg style="left:1452px;top:173px" width="17" height="18"><path d="M1 12V1H12" fill="none" stroke="#555"/><path d="M6 10L13 3L15 5L8 12L5.5 12.5Z" fill="#3e7bc4"/><rect x="0" y="13" width="16" height="4" fill="#4472c4"/></svg>
<div class="t" style="left:1471px;top:176px;font-size:12px;color:#262626;">形状轮廓</div>
<div class="arr" style="left:1522px;top:180.5px;border-top-color:#505050"></div>
<svg style="left:1452px;top:195px" width="17" height="16"><path d="M1 9L6 2H15L12 12H4Z" fill="#e8e8e8" stroke="#c0c0c0"/><path d="M12 12L15 2L15.5 5L13 13Z" fill="#b0b0b0"/></svg>
<div class="t" style="left:1471px;top:199px;font-size:12px;color:#a6a6a6;">形状效果</div>
<div class="arr" style="left:1522px;top:203.5px;border-top-color:#c4c4c4"></div>
<div class="t" style="left:1353px;top:222px;font-size:12px;color:#262626;">绘图</div>
<svg style="left:1527px;top:225px" width="8" height="8"><path d="M0.5 7V0.5H7" fill="none" stroke="#999" stroke-width="1"/><path d="M3 3L7 7M7 4V7H4" fill="none" stroke="#777" stroke-width="1"/></svg>
<div class="a" style="left:1538.7px;top:149px;width:1px;height:83px;background:#d4d4d4"></div>
<svg style="left:1547px;top:152px" width="14" height="15"><circle cx="8.5" cy="5.5" r="4.3" fill="none" stroke="#3e7bc4" stroke-width="1.6"/><path d="M5.5 8.5L1 13" stroke="#3e7bc4" stroke-width="2.2" stroke-linecap="round"/></svg>
<div class="t" style="left:1565px;top:153px;font-size:12px;color:#262626;">查找</div>
<svg style="left:1546px;top:173px" width="17" height="17"><text x="0" y="8" font-size="10" fill="#555" font-family="Liberation Sans">ab</text><text x="5" y="16" font-size="10" fill="#3e7bc4" font-family="Liberation Sans">ac</text><path d="M2 10V14H4" stroke="#3e7bc4" fill="none"/></svg>
<div class="t" style="left:1565px;top:176px;font-size:12px;color:#262626;">替换</div>
<svg style="left:1550px;top:197px" width="10" height="14"><path d="M0.5 0.5V12L3.5 9L6 13.5L8 12.5L5.5 8.5H9.5Z" fill="#fff" stroke="#555" stroke-width="1"/></svg>
<div class="t" style="left:1565px;top:199px;font-size:12px;color:#262626;">选择</div>
<div class="t" style="left:1565px;top:222px;font-size:12px;color:#262626;">编辑</div>
<div class="a" style="left:940.6999999999999px;top:267.7px;width:577.5999999999999px;height:334.4px;border:1.4px solid #999"></div>
<div class="a" style="left:935.9px;top:262.9px;width:11px;height:11px;border-radius:50%;background:#fff;border:1.8px solid #8c8c8c"></div>
<div class="a" style="left:1224.0px;top:262.9px;width:11px;height:11px;border-radius:50%;background:#fff;border:1.8px solid #8c8c8c"></div>
<div class="a" style="left:1512.1px;top:262.9px;width:11px;height:11px;border-radius:50%;background:#fff;border:1.8px solid #8c8c8c"></div>
<div class="a" style="left:935.9px;top:429.4px;width:11px;height:11px;border-radius:50%;background:#fff;border:1.8px solid #8c8c8c"></div>
<div class="a" style="left:1512.1px;top:429.4px;width:11px;height:11px;border-radius:50%;background:#fff;border:1.8px solid #8c8c8c"></div>
<div class="a" style="left:935.9px;top:595.9px;width:11px;height:11px;border-radius:50%;background:#fff;border:1.8px solid #8c8c8c"></div>
<div class="a" style="left:1224.0px;top:595.9px;width:11px;height:11px;border-radius:50%;background:#fff;border:1.8px solid #8c8c8c"></div>
<div class="a" style="left:1512.1px;top:595.9px;width:11px;height:11px;border-radius:50%;background:#fff;border:1.8px solid #8c8c8c"></div>
<div class="t" style="left:1074px;width:384px;text-align:center;top:293px;font-size:20px;letter-spacing:2.5px;color:#595959">1月2月订单对比表</div>
<div class="t" style="left:920px;width:60px;text-align:right;top:527.5px;font-size:12.5px;color:#595959">0</div>
<div class="t" style="left:920px;width:60px;text-align:right;top:506.54999999999995px;font-size:12.5px;color:#595959">100</div>
<div class="t" style="left:920px;width:60px;text-align:right;top:485.6px;font-size:12.5px;color:#595959">200</div>
<div class="t" style="left:920px;width:60px;text-align:right;top:464.65px;font-size:12.5px;color:#595959">300</div>
<div class="t" style="left:920px;width:60px;text-align:right;top:443.7px;font-size:12.5px;color:#595959">400</div>
<div class="t" style="left:920px;width:60px;text-align:right;top:422.75px;font-size:12.5px;color:#595959">500</div>
<div class="t" style="left:920px;width:60px;text-align:right;top:401.8px;font-size:12.5px;color:#595959">600</div>
<div class="t" style="left:920px;width:60px;text-align:right;top:380.85px;font-size:12.5px;color:#595959">700</div>
<div class="t" style="left:920px;width:60px;text-align:right;top:359.9px;font-size:12.5px;color:#595959">800</div>
<div class="t" style="left:920px;width:60px;text-align:right;top:338.95000000000005px;font-size:12.5px;color:#595959">900</div>
<div class="t" style="left:920px;width:60px;text-align:right;top:318.0px;font-size:12.5px;color:#595959">1000</div>
<div class="a" style="left:992.5px;top:533px;width:508px;height:1px;background:#d9d9d9"></div>
<div class="a" style="left:1024.65px;top:410.233px;width:27.6px;height:122.767px;background:#4472c4"></div>
<div class="a" style="left:1060.65px;top:341.517px;width:27.6px;height:191.483px;background:#ed7d31"></div>
<div class="t" style="left:986.45px;width:140px;text-align:center;top:545px;font-size:12px;letter-spacing:0.4px;color:#595959">老余EXCEL1</div>
<div class="a" style="left:1151.3500000000001px;top:453.80899999999997px;width:27.6px;height:79.191px;background:#4472c4"></div>
<div class="a" style="left:1187.3500000000001px;top:373.9895px;width:27.6px;height:159.0105px;background:#ed7d31"></div>
<div class="t" style="left:1113.15px;width:140px;text-align:center;top:545px;font-size:12px;letter-spacing:0.4px;color:#595959">EXCEL知识屋1</div>
<div class="a" style="left:1278.0500000000002px;top:447.524px;width:27.6px;height:85.476px;background:#4472c4"></div>
<div class="a" style="left:1314.0500000000002px;top:497.5945px;width:27.6px;height:35.405499999999996px;background:#ed7d31"></div>
<div class="t" style="left:1239.8500000000001px;width:140px;text-align:center;top:545px;font-size:12px;letter-spacing:0.4px;color:#595959">老余EXCEL2</div>
<div class="a" style="left:1404.7500000000002px;top:479.368px;width:27.6px;height:53.632px;background:#4472c4"></div>
<div class="a" style="left:1440.7500000000002px;top:496.128px;width:27.6px;height:36.872px;background:#ed7d31"></div>
<div class="t" style="left:1366.5500000000002px;width:140px;text-align:center;top:545px;font-size:12px;letter-spacing:0.4px;color:#595959">EXCEL知识屋2</div>
<div class="a" style="left:1148px;top:576px;width:6.5px;height:6.5px;background:#4472c4"></div>
<div class="t" style="left:1160px;top:572.5px;font-size:13px;letter-spacing:0.9px;color:#595959">1月份订单</div>
<div class="a" style="left:1240px;top:576px;width:6.5px;height:6.5px;background:#ed7d31"></div>
<div class="t" style="left:1251px;top:572.5px;font-size:13px;letter-spacing:0.9px;color:#595959">2月份订单</div>
<svg style="left:0;top:0" width="1" height="1"><path d="M947 631L993 580.5L990.5 578L1007 569L1000.5 587L998.5 585Z" fill="#f63838"/></svg>
<div class="a" style="left:596px;top:261px;width:94px;height:53px;border:1px solid #e2e2e2"></div>
<div class="a" style="left:635px;top:265.5px;width:29px;height:1.5px;background:#c4c4c4"></div>
<div class="a" style="left:609.4px;top:283.2206px;width:5px;height:19.2794px;background:#4472c4"></div>
<div class="a" style="left:615.6px;top:272.4294px;width:5px;height:30.0706px;background:#ed7d31"></div>
<div class="a" style="left:609.0px;top:304.5px;width:12px;height:1.2px;background:#bbb"></div>
<div class="a" style="left:630.0px;top:290.0638px;width:5px;height:12.4362px;background:#4472c4"></div>
<div class="a" style="left:636.2px;top:277.5289px;width:5px;height:24.9711px;background:#ed7d31"></div>
<div class="a" style="left:629.6px;top:304.5px;width:12px;height:1.2px;background:#bbb"></div>
<div class="a" style="left:650.6px;top:289.0768px;width:5px;height:13.4232px;background:#4472c4"></div>
<div class="a" style="left:656.8000000000001px;top:296.9399px;width:5px;height:5.560099999999999px;background:#ed7d31"></div>
<div class="a" style="left:650.2px;top:304.5px;width:12px;height:1.2px;background:#bbb"></div>
<div class="a" style="left:671.1999999999999px;top:294.0776px;width:5px;height:8.4224px;background:#4472c4"></div>
<div class="a" style="left:677.4px;top:296.7096px;width:5px;height:5.7904px;background:#ed7d31"></div>
<div class="a" style="left:670.8px;top:304.5px;width:12px;height:1.2px;background:#bbb"></div>
<div class="a" style="left:604px;top:302.5px;width:82px;height:1px;background:#e0e0e0"></div>
<div class="a" style="left:600px;top:302.0px;width:3px;height:1px;background:#c8c8c8"></div>
<div class="a" style="left:600px;top:298.71px;width:3px;height:1px;background:#c8c8c8"></div>
<div class="a" style="left:600px;top:295.42px;width:3px;height:1px;background:#c8c8c8"></div>
<div class="a" style="left:600px;top:292.13px;width:3px;height:1px;background:#c8c8c8"></div>
<div class="a" style="left:600px;top:288.84px;width:3px;height:1px;background:#c8c8c8"></div>
<div class="a" style="left:600px;top:285.55px;width:3px;height:1px;background:#c8c8c8"></div>
<div class="a" style="left:600px;top:282.26px;width:3px;height:1px;background:#c8c8c8"></div>
<div class="a" style="left:600px;top:278.97px;width:3px;height:1px;background:#c8c8c8"></div>
<div class="a" style="left:600px;top:275.68px;width:3px;height:1px;background:#c8c8c8"></div>
<div class="a" style="left:600px;top:272.39px;width:3px;height:1px;background:#c8c8c8"></div>
<div class="a" style="left:600px;top:269.1px;width:3px;height:1px;background:#c8c8c8"></div>
<div class="a" style="left:630px;top:309px;width:10px;height:1px;background:#bbb"></div>
<div class="a" style="left:645px;top:309px;width:10px;height:1px;background:#e8a070"></div>
<div class="a" style="left:1493px;top:489px;width:79px;height:26px;background:linear-gradient(#8a8a8a 0,#8a8a8a 1px,#fff 1px,#fff 2px,#6f6f6f 2px,#6a6a6a 12px,#555 13px,#505050 100%)"></div>
<div class="a" style="left:1497px;top:494px;width:1.3px;height:1.3px;background:#111"></div>
<div class="a" style="left:1499px;top:494px;width:1.3px;height:1.3px;background:#111"></div>
<div class="a" style="left:1501px;top:494px;width:1.3px;height:1.3px;background:#111"></div>
<div class="a" style="left:1503px;top:494px;width:1.3px;height:1.3px;background:#111"></div>
<div class="a" style="left:1497px;top:498px;width:1.3px;height:1.3px;background:#111"></div>
<div class="a" style="left:1499px;top:498px;width:1.3px;height:1.3px;background:#111"></div>
<div class="a" style="left:1501px;top:498px;width:1.3px;height:1.3px;background:#111"></div>
<div class="a" style="left:1503px;top:498px;width:1.3px;height:1.3px;background:#111"></div>
<div class="a" style="left:1497px;top:502px;width:1.3px;height:1.3px;background:#111"></div>
<div class="a" style="left:1499px;top:502px;width:1.3px;height:1.3px;background:#111"></div>
<div class="a" style="left:1501px;top:502px;width:1.3px;height:1.3px;background:#111"></div>
<div class="a" style="left:1503px;top:502px;width:1.3px;height:1.3px;background:#111"></div>
<div class="a" style="left:1497px;top:506px;width:1.3px;height:1.3px;background:#111"></div>
<div class="a" style="left:1499px;top:506px;width:1.3px;height:1.3px;background:#111"></div>
<div class="a" style="left:1501px;top:506px;width:1.3px;height:1.3px;background:#111"></div>
<div class="a" style="left:1503px;top:506px;width:1.3px;height:1.3px;background:#111"></div>
<div class="a" style="left:1497px;top:510px;width:1.3px;height:1.3px;background:#111"></div>
<div class="a" style="left:1499px;top:510px;width:1.3px;height:1.3px;background:#111"></div>
<div class="a" style="left:1501px;top:510px;width:1.3px;height:1.3px;background:#111"></div>
<div class="a" style="left:1503px;top:510px;width:1.3px;height:1.3px;background:#111"></div>
<div class="t" style="left:1512.5px;top:496px;font-size:12.5px;color:#fff;font-family:'Liberation Mono',monospace;letter-spacing:-0.5px">CH</div>
<svg style="left:1535px;top:495px" width="15" height="14"><path d="M3 5Q6 2 9 3Q12 4 13 1" fill="none" stroke="#999" stroke-width="0.8"/><rect x="0.7" y="6" width="13" height="7" rx="1" fill="none" stroke="#ccc" stroke-width="1.2"/><path d="M3 8.5H11M3 10.8H11" stroke="#ccc" stroke-width="1" stroke-dasharray="1 .8"/></svg>
<div class="a" style="left:1561px;top:497px;width:5px;height:2px;background:#fff"></div>
<div class="arr" style="left:1561px;top:506px;border-top-color:#fff;border-top-width:3px"></div>
<svg style="left:1577px;top:474px" width="12" height="60"><rect x="3" y="1" width="9" height="48" rx="4.5" fill="#909aa3" /><circle cx="8" cy="50" r="6" fill="#5f6f7c"/><rect x="5" y="9" width="6" height="40" fill="#d0331e"/><circle cx="8" cy="50" r="4.5" fill="#e03a20"/></svg>
<div class="a" style="left:351px;top:490.5px;width:203px;height:38px;background:linear-gradient(#ffffff,#e2e3ef);border:1px solid #5e5e5e;border-radius:3px"></div>
<div class="t" style="left:357px;top:494px;font-size:12px;color:#3c3c3c">系列 "1月份订单" 点 "老余EXCEL2"</div>
<div class="t" style="left:357px;top:511px;font-size:12px;color:#3c3c3c">值: 408</div>
</body></html>
